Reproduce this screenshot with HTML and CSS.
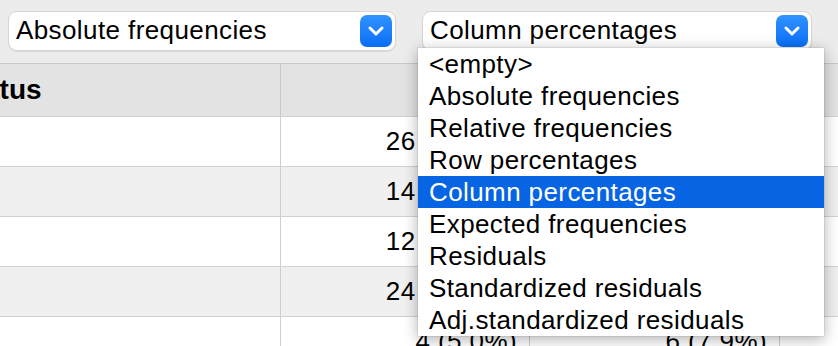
FILE: index.html
```html
<!DOCTYPE html>
<html>
<head>
<meta charset="utf-8">
<link rel="stylesheet" href="styles.css">
</head>
<body>
<div class="toolbar">
  <div class="select s1">
    <span class="label">Absolute frequencies</span>
    <span class="btn"><svg width="16" height="10" viewBox="0 0 16 10"><path d="M2 2 L8 8 L14 2" fill="none" stroke="#fff" stroke-width="3" stroke-linecap="round" stroke-linejoin="round"/></svg></span>
  </div>
  <div class="select s2">
    <span class="label">Column percentages</span>
    <span class="btn"><svg width="16" height="10" viewBox="0 0 16 10"><path d="M2 2 L8 8 L14 2" fill="none" stroke="#fff" stroke-width="3" stroke-linecap="round" stroke-linejoin="round"/></svg></span>
  </div>
</div>
<div class="grid">
  <div class="cell head first">Status</div>
  <div class="cell head"></div>
  <div class="cell head"></div>
  <div class="cell head last"></div>

  <div class="cell first"></div>
  <div class="cell num">26 (32.5%)</div>
  <div class="cell num">20 (26.3%)</div>
  <div class="cell num last"></div>

  <div class="cell alt first"></div>
  <div class="cell alt num">14 (17.5%)</div>
  <div class="cell alt num">16 (21.1%)</div>
  <div class="cell alt num last"></div>

  <div class="cell first"></div>
  <div class="cell num">12 (15.0%)</div>
  <div class="cell num">10 (13.2%)</div>
  <div class="cell num last"></div>

  <div class="cell alt first"></div>
  <div class="cell alt num">24 (30.0%)</div>
  <div class="cell alt num">24 (31.6%)</div>
  <div class="cell alt num last"></div>

  <div class="cell first"></div>
  <div class="cell num">4 (5.0%)</div>
  <div class="cell num">6 (7.9%)</div>
  <div class="cell num last"></div>
</div>

<ul class="popup">
  <li>&lt;empty&gt;</li>
  <li>Absolute frequencies</li>
  <li>Relative frequencies</li>
  <li>Row percentages</li>
  <li class="sel">Column percentages</li>
  <li>Expected frequencies</li>
  <li>Residuals</li>
  <li>Standardized residuals</li>
  <li>Adj.standardized residuals</li>
</ul>
</body>
</html>
```
FILE: styles.css
```css
html, body {
  margin: 0;
  padding: 0;
}
body {
  width: 838px;
  height: 346px;
  overflow: hidden;
  background: #ececec;
  font-family: "Liberation Sans", Arial, sans-serif;
  color: #000;
  position: relative;
}
.toolbar {
  height: 64px;
  display: flex;
  align-items: center;
  padding-left: 8px;
  padding-bottom: 2px;
  gap: 26px;
  box-sizing: border-box;
  border-bottom: 1px solid #c9c9c9;
}
.select {
  height: 40px;
  box-sizing: border-box;
  background: #fff;
  border-radius: 9px;
  border: 1px solid #d6d6d6;
  box-shadow: 0 1px 1px rgba(0,0,0,0.08);
  display: flex;
  align-items: center;
  justify-content: space-between;
  padding: 0 3px 0 7px;
  font-size: 26px;
  letter-spacing: 0.4px;
}
.s1 { width: 388px; }
.s2 { width: 390px; }
.btn {
  width: 32px;
  height: 32px;
  border-radius: 7px;
  background: linear-gradient(#3393ff, #0a6ef6);
  display: flex;
  align-items: center;
  justify-content: center;
}
.btn svg { display: block; }
.grid {
  display: grid;
  grid-template-columns: 281px 249px 250px 1fr;
  grid-template-rows: 53px repeat(5, 50px);
}
.cell {
  box-sizing: border-box;
  border-right: 1px solid #cfcfcf;
  border-bottom: 1px solid #d2d2d2;
  background: #fff;
  display: flex;
  align-items: center;
  font-size: 26px;
  letter-spacing: 0.4px;
  overflow: hidden;
  white-space: nowrap;
}
.cell.head {
  background: #e3e3e3;
  font-weight: bold;
  font-size: 28px;
  letter-spacing: 0;
  border-right-color: #c8c8c8;
}
.cell.head.first {
  text-indent: -44px;
  padding-left: 0;
}
.cell.alt { background: #f0f0f0; }
.cell.num {
  justify-content: flex-end;
  padding-right: 12px;
}
.cell.last { border-right: none; }
.popup {
  position: absolute;
  left: 418px;
  top: 48px;
  width: 406px;
  margin: 0;
  padding: 0;
  list-style: none;
  background: #fff;
  box-shadow: 0 3px 14px rgba(0,0,0,0.32), 0 0 0 1px rgba(0,0,0,0.06);
  font-size: 26px;
  letter-spacing: 0.4px;
}
.popup li {
  height: 32px;
  line-height: 32px;
  padding-left: 11px;
  white-space: nowrap;
}
.popup li.sel {
  background: #0764e2;
  color: #fff;
}
```
